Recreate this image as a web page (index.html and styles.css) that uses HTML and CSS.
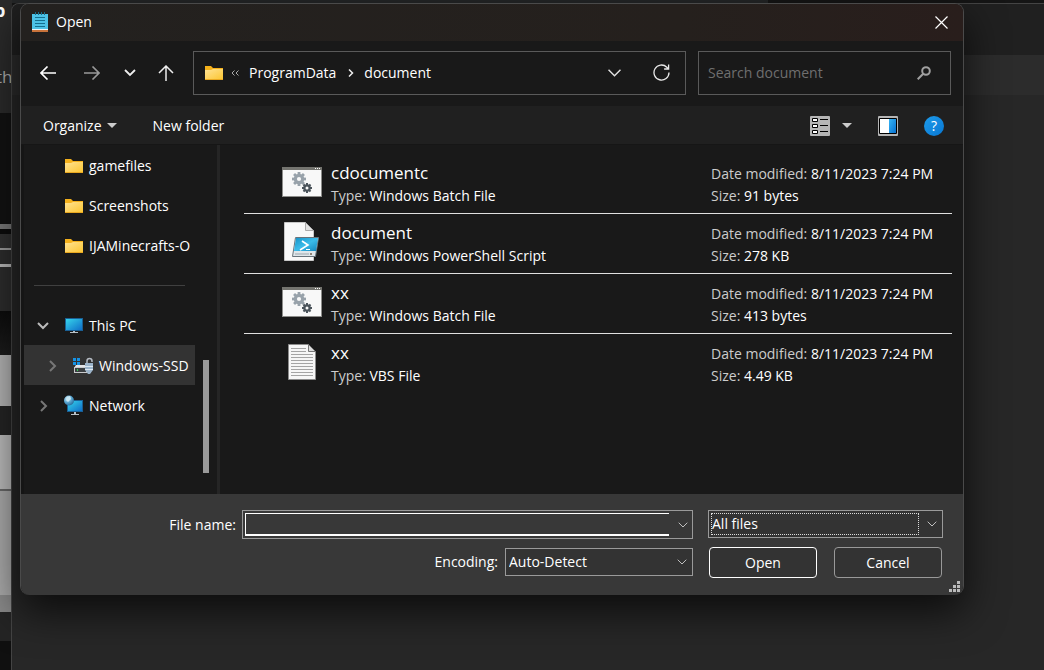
FILE: index.html
```
<!DOCTYPE html>
<html lang="en">
<head>
    <meta charset="UTF-8">
    <meta name="viewport" content="width=device-width, initial-scale=1.0">
    <title>Open</title>
    <link rel="stylesheet" href="styles.css">
</head>
<body>
    <!-- shared icons -->
    <svg class="defs" width="0" height="0" aria-hidden="true">
        <defs>
            <linearGradient id="gFolder" x1="0" y1="0" x2="1" y2="1">
                <stop offset="0" stop-color="#ffe394"/>
                <stop offset="1" stop-color="#fcc633"/>
            </linearGradient>
            <linearGradient id="gScreen" x1="0" y1="0" x2="1" y2="1">
                <stop offset="0" stop-color="#36d3ea"/>
                <stop offset="1" stop-color="#0f6fc9"/>
            </linearGradient>
            <linearGradient id="gPane" x1="0" y1="0" x2="1" y2="1">
                <stop offset="0" stop-color="#38b6f5"/>
                <stop offset="1" stop-color="#0670cf"/>
            </linearGradient>
            <radialGradient id="gGlobe" cx="0.35" cy="0.3" r="0.8">
                <stop offset="0" stop-color="#d5eef8"/>
                <stop offset="0.5" stop-color="#5ba6d0"/>
                <stop offset="1" stop-color="#1d5f92"/>
            </radialGradient>
            <linearGradient id="gShell" x1="0" y1="0" x2="1" y2="1">
                <stop offset="0" stop-color="#1591c6"/>
                <stop offset="0.5" stop-color="#3bbcea"/>
                <stop offset="1" stop-color="#1486bd"/>
            </linearGradient>
            <symbol id="folder" viewBox="0 0 18 14">
                <path d="M0 0h6l2 2h10v12H0z" fill="#f5b11b"/>
                <path d="M0 4h6l2-1h10v10H0z" fill="url(#gFolder)"/>
                <path d="M0 13h18v1H0z" fill="#e9a820"/>
            </symbol>
            <symbol id="gear" viewBox="-10 -10 20 20">
                <g fill="currentColor">
                    <rect x="-2" y="-10" width="4" height="20"/>
                    <rect x="-2" y="-10" width="4" height="20" transform="rotate(45)"/>
                    <rect x="-2" y="-10" width="4" height="20" transform="rotate(90)"/>
                    <rect x="-2" y="-10" width="4" height="20" transform="rotate(135)"/>
                    <circle r="7.5"/>
                </g>
                <circle r="3" fill="#f8f8f8"/>
            </symbol>
            <symbol id="batch" viewBox="0 0 40 30">
                <path d="M0 0h40v30H0z" fill="#8d8d8a"/>
                <path d="M1 3h38v26H1z" fill="#f8f8f8"/>
                <path d="M0 0h40v3H0z" fill="#74746f"/>
                <path d="M33 1h1v1h-1zM35 1h1v1h-1zM37 1h1v1h-1z" fill="#fff"/>
                <use href="#gear" x="10" y="5" width="14" height="14" color="#98a2aa"/>
                <use href="#gear" x="20" y="16" width="10" height="10" color="#4b545b"/>
            </symbol>
            <symbol id="down" viewBox="0 0 10 6">
                <path d="M0.7 0.7L5 5l4.3-4.3" fill="none" stroke="currentColor"/>
            </symbol>
        </defs>
    </svg>

    <div class="desktop">
        <div class="back-strip">
            <div class="back-title">p</div>
            <div class="back-text">th</div>
        </div>
        <div class="back-window">
            <div class="back-bar"></div>
            <div class="back-menu"></div>
        </div>

        <main class="dialog">
            <header class="titlebar">
                <svg width="16" height="20" viewBox="0 0 16 20">
                    <path d="M0 2h16v17H0z" fill="#4cc2e6"/>
                    <path d="M0 18h16v2H0z" fill="#c8733b"/>
                    <path d="M0 17h16v1H0z" fill="#e8f4f8"/>
                    <path d="M3 5.500h10M3 8.500h10M3 11.500h10M3 14.500h10" stroke="#14708f"/>
                    <path d="M3.500 0v3M6.500 0v3M9.500 0v3M12.500 0v3" stroke="#176b87"/>
                </svg>
                <h1>Open</h1>
                <button class="close" aria-label="Close">
                    <svg width="13" height="13" viewBox="0 0 13 13"><path d="M0.500 0.500l12 12M12.500 0.500l-12 12" stroke="#fff" stroke-width="1.200"/></svg>
                </button>
            </header>

            <nav class="navbar">
                <button class="nav-btn" aria-label="Back">
                    <svg width="16" height="14" viewBox="0 0 16 14" fill="none" stroke="#fff" stroke-width="1.600"><path d="M16 7H1M7.500 0.500L1 7l6.500 6.500"/></svg>
                </button>
                <button class="nav-btn" aria-label="Forward">
                    <svg width="16" height="14" viewBox="0 0 16 14" fill="none" stroke="#999" stroke-width="1.600"><path d="M0 7h15M8.500 0.500L15 7l-6.500 6.500"/></svg>
                </button>
                <button class="nav-btn nav-recent" aria-label="Recent locations">
                    <svg width="12" height="8" viewBox="0 0 12 8" fill="none" stroke="#eee" stroke-width="1.800"><path d="M1 1l5 5 5-5"/></svg>
                </button>
                <button class="nav-btn nav-up" aria-label="Up">
                    <svg width="16" height="16" viewBox="0 0 16 16" fill="none" stroke="#eee" stroke-width="1.500"><path d="M8 16V1M1 8l7-7 7 7"/></svg>
                </button>
                <div class="address">
                    <svg width="18" height="14"><use href="#folder"/></svg>
                    <svg class="crumb-more" width="8" height="6" viewBox="0 0 8 6" fill="none" stroke="#aaa"><path d="M3.500 0.500L1 3l2.500 2.500M7.500 0.500L5 3l2.500 2.500"/></svg>
                    <a href="#">ProgramData</a>
                    <svg class="crumb-sep" width="6" height="8" viewBox="0 0 6 8" fill="none" stroke="#eee" stroke-width="1.500"><path d="M1 0.500L4.500 4 1 7.500"/></svg>
                    <a href="#">document</a>
                    <button class="addr-btn addr-down" aria-label="Previous locations">
                        <svg width="13" height="8" viewBox="0 0 13 8" fill="none" stroke="#ddd" stroke-width="1.500"><path d="M0.500 0.700l6 6 6-6"/></svg>
                    </button>
                    <button class="addr-btn" aria-label="Refresh">
                        <svg width="17" height="17" viewBox="0 0 17 17" fill="none" stroke="#e8e8e8" stroke-width="1.300"><path d="M16 8.500a7.500 7.500 0 1 1-2.200-5.300L15.500 5M15.600 0.500V5h-4.500"/></svg>
                    </button>
                </div>
                <div class="search">
                    <input type="text" placeholder="Search document" aria-label="Search document">
                    <svg width="14" height="14" viewBox="0 0 14 14" fill="none" stroke="#a0a0a0"><circle cx="9" cy="5" r="3.800" stroke-width="2"/><path d="M6.200 7.800L0.700 13.300" stroke-width="2"/></svg>
                </div>
            </nav>

            <div class="toolbar">
                <button class="tool">Organize <span class="caret"></span></button>
                <button class="tool">New folder</button>
                <button class="tool tool-view" aria-label="Change your view">
                    <svg width="20" height="20" viewBox="0 0 20 20">
                        <rect width="20" height="20" rx="1" fill="#b5b5b5"/>
                        <path d="M2.500 2.500h5v3h-5zM2.500 8.500h5v3h-5zM2.500 14.500h5v3h-5z" fill="#fff" stroke="#000"/>
                        <path d="M10 3.500h8M10 9.500h8M10 15.500h8" stroke="#000"/>
                    </svg>
                    <span class="caret"></span>
                </button>
                <button class="tool tool-pane" aria-label="Show the preview pane">
                    <svg width="20" height="20" viewBox="0 0 20 20">
                        <rect width="20" height="20" rx="1" fill="#b5b5b5"/>
                        <path d="M1.500 2.500h17v15h-17z" fill="#fff" stroke="#000"/>
                        <path d="M11 3h7v14h-7z" fill="url(#gPane)"/>
                    </svg>
                </button>
                <button class="tool help" aria-label="Get help">?</button>
            </div>

            <div class="content">
                <aside class="sidebar">
                    <ul class="tree">
                        <li class="leaf"><svg width="18" height="14"><use href="#folder"/></svg>gamefiles</li>
                        <li class="leaf"><svg width="18" height="14"><use href="#folder"/></svg>Screenshots</li>
                        <li class="leaf"><svg width="18" height="14"><use href="#folder"/></svg>IJAMinecrafts-O</li>
                        <li class="divider"></li>
                        <li>
                            <svg class="twisty" width="12" height="8" viewBox="0 0 12 8" fill="none" stroke="#bbb" stroke-width="2"><path d="M1 1l5 5 5-5"/></svg>
                            <svg width="18" height="16" viewBox="0 0 18 16">
                                <path d="M0 0h18v13H0z" fill="#1a5f94"/>
                                <path d="M1 1h16v11H1z" fill="url(#gScreen)"/>
                                <path d="M8 13h2v1h3v1H5v-1h3z" fill="#b8c0c6"/>
                            </svg>This PC
                        </li>
                        <li class="nested selected">
                            <svg class="twisty" width="8" height="12" viewBox="0 0 8 12" fill="none" stroke="#777" stroke-width="2"><path d="M1 1l5 5-5 5"/></svg>
                            <svg width="20" height="18" viewBox="0 0 20 18">
                                <path d="M0 1h3v3H0zM4 1h3v3H4zM0 5h3v3H0zM4 5h3v3H4z" fill="#1593e6"/>
                                <path d="M3 8h12l3 3H1z" fill="#e4e4e6"/>
                                <path d="M1 10h17v6H1z" fill="#c9cacc"/>
                                <path d="M2 11h11v4H2z" fill="#3b3f42"/>
                                <path d="M4 12h1v2H4z" fill="#39d353"/>
                                <path d="M14 6V4a2.500 2.500 0 0 1 5 0v1" fill="none" stroke="#b4bac2" stroke-width="1.500"/>
                                <path d="M12 6h8v7l-3 4h-2l-3-4z" fill="#9cb4ca"/>
                                <path d="M12 9h8v1h-8zM12 12h8v1h-8z" fill="#dce7f0"/>
                            </svg>Windows-SSD
                        </li>
                        <li>
                            <svg class="twisty" width="12" height="12" viewBox="0 0 12 12" fill="none" stroke="#777" stroke-width="2"><path d="M4 1l5 5-5 5"/></svg>
                            <svg width="20" height="21" viewBox="1 0 20 21">
                                <path d="M4 5h16v12H4z" fill="#1a5f94"/>
                                <path d="M5 6h14v10H5z" fill="url(#gScreen)"/>
                                <path d="M11 17h2v2h3v1H8v-1h3z" fill="#b8c0c6"/>
                                <circle cx="6" cy="5.500" r="5" fill="url(#gGlobe)"/>
                                <path d="M4 2l3-1 1 3-3 3-2-2z" fill="#c9e8f4"/>
                            </svg>Network
                        </li>
                    </ul>
                    <div class="scrollbar"><div class="thumb"></div></div>
                </aside>

                <ul class="files">
                    <li>
                        <svg width="40" height="30"><use href="#batch"/></svg>
                        <div class="file-main">
                            <div class="file-name">cdocumentc</div>
                            <div><span>Type:</span> Windows Batch File</div>
                        </div>
                        <div class="file-meta">
                            <div><span>Date modified:</span> 8/11/2023 7:24 PM</div>
                            <div><span>Size:</span> 91 bytes</div>
                        </div>
                    </li>
                    <li>
                        <svg width="40" height="40" viewBox="0 0 40 40">
                            <path d="M2.500 0.500h21l8 8v30h-29z" fill="#f8f8f8" stroke="#c8c8c8"/>
                            <path d="M23.500 0.500v8h8z" fill="#e2e2e2" stroke="#aaa"/>
                            <path d="M13.500 15.500h23l-3 19h-23z" fill="#dfe6ea" stroke="#68737b"/>
                            <path d="M14 16h22l-2 13H12z" fill="url(#gShell)"/>
                            <path d="M20 19l6 4-8 5" fill="none" stroke="#fff" stroke-width="1.600"/>
                            <path d="M24 27.500h4" stroke="#fff" stroke-width="1.200"/>
                            <path d="M13 32h14" stroke="#9ba5ab"/>
                            <circle cx="29" cy="32" r="1" fill="#76624f"/>
                        </svg>
                        <div class="file-main">
                            <div class="file-name">document</div>
                            <div><span>Type:</span> Windows PowerShell Script</div>
                        </div>
                        <div class="file-meta">
                            <div><span>Date modified:</span> 8/11/2023 7:24 PM</div>
                            <div><span>Size:</span> 278 KB</div>
                        </div>
                    </li>
                    <li>
                        <svg width="40" height="30"><use href="#batch"/></svg>
                        <div class="file-main">
                            <div class="file-name">xx</div>
                            <div><span>Type:</span> Windows Batch File</div>
                        </div>
                        <div class="file-meta">
                            <div><span>Date modified:</span> 8/11/2023 7:24 PM</div>
                            <div><span>Size:</span> 413 bytes</div>
                        </div>
                    </li>
                    <li>
                        <svg width="40" height="36" viewBox="0 0 40 36">
                            <path d="M6.500 0.500h20l7 7v28h-27z" fill="#f6f6f6" stroke="#8c8c8c"/>
                            <path d="M26.500 0.500v7h7z" fill="#ddd" stroke="#777"/>
                            <path d="M9 4.500h15M9 7.500h15M9 10.500h22M9 13.500h22M9 16.500h22M9 19.500h22M9 22.500h22M9 25.500h22M9 28.500h22M9 31.500h22" stroke="#a4a4a4"/>
                        </svg>
                        <div class="file-main">
                            <div class="file-name">xx</div>
                            <div><span>Type:</span> VBS File</div>
                        </div>
                        <div class="file-meta">
                            <div><span>Date modified:</span> 8/11/2023 7:24 PM</div>
                            <div><span>Size:</span> 4.49 KB</div>
                        </div>
                    </li>
                </ul>
            </div>

            <footer class="footer">
                <label class="name-label" for="fileName">File name:</label>
                <div class="combo">
                    <input type="text" id="fileName">
                    <button aria-label="Show file names"><svg width="10" height="6"><use href="#down"/></svg></button>
                </div>
                <div class="select type-select">
                    <select id="fileType" aria-label="File type"><option>All files</option></select>
                    <svg width="10" height="6"><use href="#down"/></svg>
                </div>
                <div class="encoding">
                    <label for="encoding">Encoding:</label>
                    <div class="select">
                        <select id="encoding"><option>Auto-Detect</option></select>
                        <svg width="10" height="6"><use href="#down"/></svg>
                    </div>
                </div>
                <div class="actions">
                    <button class="primary">Open</button>
                    <button>Cancel</button>
                </div>
                <svg class="grip" width="11" height="11" viewBox="0 0 11 11" fill="#bbb"><path d="M8 0h3v3H8zM4 4h3v3H4zM8 4h3v3H8zM0 8h3v3H0zM4 8h3v3H4zM8 8h3v3H8z"/></svg>
            </footer>
        </main>
    </div>
</body>
</html>
```

FILE: styles.css
```
* {
    box-sizing: border-box;
}
body {
    margin: 0;
    font-family: "Open Sans", "Noto Sans", sans-serif;
    font-size: 14px;
    line-height: 22px;
    color: #fff;
    background: #171717;
}
button,
input,
select {
    font: inherit;
    color: inherit;
    background: none;
    border: none;
    border-radius: 0;
    padding: 0;
    margin: 0;
    outline: none;
}
ul {
    list-style: none;
    margin: 0;
    padding: 0;
}
a {
    color: inherit;
    text-decoration: none;
}
svg {
    display: block;
    flex: none;
}
.defs {
    position: absolute;
}

/* windows behind the dialog */
.desktop {
    position: relative;
    min-height: 100vh;
    overflow: hidden;
    background: linear-gradient(#242627, #242627) 0 0 / 768px 3px no-repeat #151515;
}
.back-strip {
    position: absolute;
    top: 0;
    bottom: 0;
    left: 0;
    width: 12px;
    overflow: hidden;
    background: linear-gradient(
        #2a2a2a 0 113px, #121212 113px 224px, #777 224px 229px, #0c0c0c 229px 234px,
        #303030 234px 248px, #999 248px 250px, #2c2c2c 250px 264px, #b5b5b5 264px 267px,
        #2c2c2c 267px 311px, #0c0c0c 311px, #1c1c1c 355px, #b0b0b0 355px 406px,
        #242424 406px 435px, #b8b8b8 435px 489px, #666 489px 491px, #a8a8a8 491px 595px,
        #888 595px 612px, #242424 612px 641px, #101010 641px);
}
.back-title {
    margin-left: -6px;
    font-size: 18px;
    font-weight: bold;
    line-height: 20px;
}
.back-text {
    margin-top: 45px;
    margin-left: -4px;
    font-size: 17px;
    line-height: 24px;
    color: #aaa;
}
.back-window {
    position: absolute;
    top: 3px;
    right: 0;
    bottom: 0;
    left: 11px;
    border-top: 1px solid #444;
    border-left: 1px solid #444;
    border-radius: 8px 0 0 0;
    background: #272727;
    overflow: hidden;
}
.back-bar {
    height: 51px;
    background: #202020;
}
.back-menu {
    height: 40px;
    background: #2c2c2c;
}

.dialog {
    position: absolute;
    top: 3px;
    right: 80px;
    left: 20px;
    display: flex;
    flex-direction: column;
    border: 1px solid #4a4a4a;
    border-bottom: none;
    border-radius: 9px;
    background: #191919;
    box-shadow: 0 16px 40px rgba(0, 0, 0, 0.7);
    overflow: hidden;
}

.titlebar {
    display: flex;
    align-items: center;
    height: 37px;
    padding: 0 15px 1px 11px;
    background: linear-gradient(90deg, #23211f, #25201d 70%, #291e1c);
}
.titlebar h1 {
    flex: 1;
    margin: 0 0 0 8px;
    font-size: 14px;
    font-weight: normal;
}

.navbar {
    display: flex;
    align-items: center;
    height: 65px;
    padding: 0 12px 2px 5px;
}
.nav-btn {
    display: grid;
    place-items: center;
    width: 44px;
    height: 40px;
}
.nav-recent {
    width: 32px;
}
.nav-up {
    width: 40px;
}
.address,
.search {
    display: flex;
    align-items: center;
    height: 44px;
    border: 1px solid #5a5a5a;
}
.address {
    flex: 1;
    margin: 0 12px 0 7px;
    padding: 0 14px 0 11px;
}
.crumb-more {
    margin: 0 10px 0 8px;
}
.crumb-sep {
    margin: 0 10px 0 12px;
}
.addr-btn {
    display: grid;
    place-items: center;
    width: 20px;
    height: 30px;
}
.addr-down {
    margin: 0 27px 0 auto;
}
.search {
    width: 253px;
    padding: 0 19px 0 9px;
}
.search input {
    flex: 1;
    min-width: 0;
}
.search input::placeholder {
    color: #6f6f6f;
    opacity: 1;
}

.toolbar {
    display: flex;
    align-items: center;
    height: 39px;
    padding: 1px 19px 0 22px;
    background: #202020;
    border-bottom: 1px solid #161616;
}
.tool {
    display: flex;
    align-items: center;
    gap: 5px;
    margin-right: 36px;
}
.caret {
    border: 5px solid transparent;
    border-top-color: #ccc;
    border-bottom: none;
}
.tool-view {
    gap: 12px;
    margin-left: auto;
    margin-right: 26px;
}
.tool-pane {
    margin-right: 26px;
}
.help {
    justify-content: center;
    width: 20px;
    height: 20px;
    margin: 0;
    border-radius: 50%;
    background: linear-gradient(135deg, #1d9bea, #0877d3);
}

.content {
    display: flex;
    min-height: 349px;
}
.sidebar {
    display: flex;
    width: 199px;
    border-left: 3px solid #151515;
    border-right: 3px solid #252525;
}
.tree {
    width: 171px;
    overflow: hidden;
}
.tree li {
    display: flex;
    align-items: center;
    gap: 6px;
    height: 40px;
    padding: 1px 0 0 13px;
    white-space: nowrap;
}
.tree .leaf {
    padding-left: 41px;
}
.tree .nested {
    padding-left: 25px;
}
.tree .selected {
    background: #333;
}
.tree .divider::before {
    content: "";
    width: 151px;
    margin-left: -3px;
    border-top: 1px solid #404040;
}
.twisty {
    margin-right: 10px;
}
.tree li:last-child {
    gap: 5px;
}
.scrollbar {
    flex: 1;
    padding: 215px 8px 0 8px;
}
.thumb {
    width: 6px;
    height: 113px;
    background: #9a9a9a;
}

.files {
    flex: 1;
    padding: 9px 11px 0 24px;
}
.files li {
    display: flex;
    align-items: flex-end;
    height: 60px;
    padding: 0 0 6px 38px;
    border-bottom: 1px solid #e0e0e0;
}
.files li:last-child {
    border-bottom-color: transparent;
}
.files svg {
    align-self: center;
    margin-top: 2px;
}
.files span {
    color: #ccc;
}
.file-main {
    flex: 1;
    margin-left: 9px;
}
.file-name {
    font-size: 17px;
    line-height: 24px;
}
.file-meta {
    width: 241px;
}

.footer {
    position: relative;
    display: grid;
    grid-template-columns: 215px 1fr 235px;
    gap: 8px 0;
    padding: 16px 20px 17px 0;
    background: #383838;
}
.name-label {
    align-self: center;
    text-align: right;
}
.combo,
.select {
    display: flex;
    align-items: center;
    border: 1px solid #9a9a9a;
}
.combo {
    height: 29px;
    margin: 0 15px 0 6px;
    padding: 2px;
}
.combo input {
    flex: 1;
    align-self: stretch;
    min-width: 0;
    border: 1px solid #fff;
    border-right: none;
    border-bottom-width: 2px;
}
.combo button {
    padding: 0 2px 0 9px;
}
.combo svg,
.select svg {
    color: #c0c0c0;
}
.select {
    position: relative;
    height: 28px;
    background: #333;
}
.select select {
    appearance: none;
    width: 100%;
    height: 22px;
    padding-left: 3px;
}
.select svg {
    position: absolute;
    right: 5px;
    pointer-events: none;
}
.type-select {
    padding: 0 23px 0 2px;
}
.type-select select {
    padding-left: 0;
    border: 1px dotted #ddd;
    line-height: 20px;
}
.encoding {
    grid-column: 1 / 3;
    display: flex;
    align-items: center;
    justify-content: flex-end;
    gap: 7px;
    margin-right: 15px;
    padding-bottom: 1px;
}
.encoding .select {
    width: 188px;
}
.actions {
    display: flex;
    justify-content: space-between;
    padding: 0 1px;
}
.actions button {
    width: 108px;
    height: 31px;
    border: 1px solid #999;
    border-radius: 4px;
    background: #333;
}
.actions .primary {
    border-color: #fff;
}
.grip {
    position: absolute;
    right: 3px;
    bottom: 3px;
}
```
